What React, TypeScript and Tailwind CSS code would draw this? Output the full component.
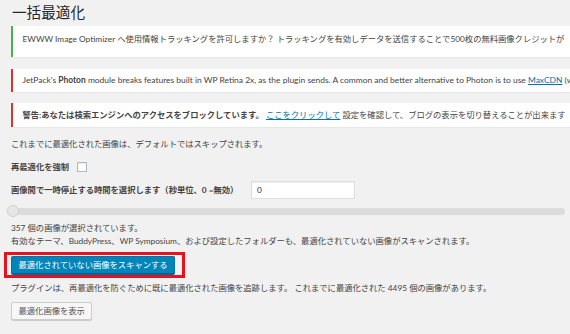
import React from "react";

const FONT = "font-['Lato','Noto_Sans_CJK_JP',sans-serif]";

const App: React.FC = () => {
  return (
    <div
      className={`w-[570px] h-[334px] overflow-hidden bg-[#f1f1f1] text-[#444] text-[8.3px] ${FONT}`}
    >
      <div className="pl-[11px]">
        {/* 見出し */}
        <h1 className="h-[24px] mb-[2px] pl-[1px] text-[14.6px] leading-[24px] text-[#23282d] font-['Noto_Sans_CJK_JP',sans-serif]">
          一括最適化
        </h1>

        {/* 通知 1 */}
        <div className="h-[31px] pb-[4px] flex items-center bg-white border-l-[2.5px] border-[#46b450] shadow-[0_1px_1px_rgba(0,0,0,0.04)] pl-[9.5px] whitespace-nowrap overflow-hidden">
          EWWW Image Optimizer へ使用情報トラッキングを許可しますか？ トラッキングを有効しデータを送信することで500枚の無料画像クレジットが
        </div>

        {/* 通知 2 */}
        <div className="mt-[12px] h-[23px] flex items-center bg-white border-l-[2.5px] border-[#dc3232] shadow-[0_1px_1px_rgba(0,0,0,0.04)] pl-[9.5px] whitespace-nowrap overflow-hidden text-[8.45px]">
          JetPack's&nbsp;<b className="font-bold">Photon</b>&nbsp;module breaks features built in WP Retina 2x, as the plugin sends. A common and better alternative to Photon is to use&nbsp;
          <a className="text-[#0073aa] underline">MaxCDN</a>&nbsp;(w
        </div>

        {/* 通知 3 */}
        <div className="mt-[11px] h-[24px] flex items-center bg-white border-l-[2.5px] border-[#dc3232] shadow-[0_1px_1px_rgba(0,0,0,0.04)] pl-[9.5px] whitespace-nowrap overflow-hidden">
          <b className="font-bold">警告:あなたは検索エンジンへのアクセスをブロックしています。</b>
          &nbsp;<a className="text-[#0073aa] underline">ここをクリックして</a>&nbsp;設定を確認して、ブログの表示を切り替えることが出来ます
        </div>

        <p className="mt-[10px] h-[14px] leading-[14px]">
          これまでに最適化された画像は、デフォルトではスキップされます。
        </p>

        <div className="mt-[9px] h-[14px] flex items-center gap-[8px]">
          <span className="font-bold">再最適化を強制</span>
          <span className="w-[10px] h-[10px] bg-white border border-[#b4b9be] shadow-[inset_0_1px_2px_rgba(0,0,0,0.1)]" />
        </div>

        <div className="mt-[7px] h-[18px] flex items-center">
          <span className="font-bold w-[240px] pt-[1px]">
            画像間で一時停止する時間を選択します（秒単位、0 =無効）
          </span>
          <div className="w-[104px] h-[18px] bg-white border border-[#ddd] shadow-[inset_0_1px_2px_rgba(0,0,0,0.07)] pl-[5px] flex items-center text-[#32373c]">
            0
          </div>
        </div>

        {/* スライダー */}
        <div className="relative mt-[6px] h-[12px] ml-[-4px] w-[558px] flex items-center">
          <div className="w-full h-[7px] rounded-full bg-[#dcdcdc]" />
          <span className="absolute left-0 top-0 w-[12px] h-[12px] rounded-full bg-[#e6e6e6] border border-[#d0d0d0]" />
        </div>

        <p className="mt-[5px] leading-[13px]">
          357 個の画像が選択されています。
          <br />
          有効なテーマ、BuddyPress、WP Symposium、および設定したフォルダーも、最適化されていない画像がスキャンされます。
        </p>

        {/* スキャンボタン */}
        <div className="mt-[4px] ml-[-7px] inline-flex border-[3px] border-[#e5131d] pl-[4px] pr-[7px] py-[1px]">
          <button className="h-[18px] px-[6.5px] bg-[#0085ba] border border-[#0073aa] border-b-[#006799] rounded-[2px] text-white leading-none shadow-[0_1px_0_#006799]">
            最適化されていない画像をスキャンする
          </button>
        </div>

        <p className="mt-[3px] h-[14px] leading-[14px]">
          プラグインは、再最適化を防ぐために既に最適化された画像を追跡します。 これまでに最適化された 4495 個の画像があります。
        </p>

        <div className="mt-[7px]">
          <button className="h-[18px] px-[6.5px] bg-[#f7f7f7] border border-[#ccc] rounded-[2px] text-[#555] leading-none shadow-[0_1px_0_#ccc]">
            最適化画像を表示
          </button>
        </div>
      </div>
    </div>
  );
};

export default App;
